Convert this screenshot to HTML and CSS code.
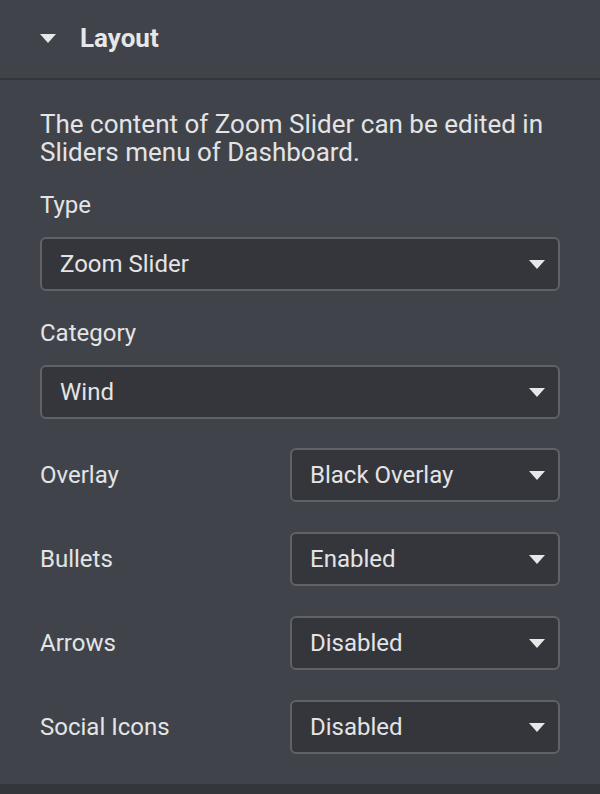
FILE: index.html
```html
<!DOCTYPE html>
<html>
<head>
<meta charset="utf-8">
<link rel="stylesheet" href="styles.css">
</head>
<body>
<div class="panel">
  <div class="section-head">
    <svg class="caret" width="16" height="9" viewBox="0 0 16 9"><path d="M0 0H16L8 9Z" fill="#e6e7e9"/></svg>
    <span class="section-title">Layout</span>
  </div>
  <div class="section-body">
    <p class="desc">The content of Zoom Slider can be edited in Sliders menu of Dashboard.</p>
    <div class="field block">
      <label class="label">Type</label>
      <div class="select"><span>Zoom Slider</span><svg class="arrow" width="16" height="9" viewBox="0 0 16 9"><path d="M0 0H16L8 9Z" fill="#e6e7e9"/></svg></div>
    </div>
    <div class="field block">
      <label class="label">Category</label>
      <div class="select"><span>Wind</span><svg class="arrow" width="16" height="9" viewBox="0 0 16 9"><path d="M0 0H16L8 9Z" fill="#e6e7e9"/></svg></div>
    </div>
    <div class="field inline">
      <label class="label">Overlay</label>
      <div class="select"><span>Black Overlay</span><svg class="arrow" width="16" height="9" viewBox="0 0 16 9"><path d="M0 0H16L8 9Z" fill="#e6e7e9"/></svg></div>
    </div>
    <div class="field inline">
      <label class="label">Bullets</label>
      <div class="select"><span>Enabled</span><svg class="arrow" width="16" height="9" viewBox="0 0 16 9"><path d="M0 0H16L8 9Z" fill="#e6e7e9"/></svg></div>
    </div>
    <div class="field inline">
      <label class="label">Arrows</label>
      <div class="select"><span>Disabled</span><svg class="arrow" width="16" height="9" viewBox="0 0 16 9"><path d="M0 0H16L8 9Z" fill="#e6e7e9"/></svg></div>
    </div>
    <div class="field inline">
      <label class="label">Social Icons</label>
      <div class="select"><span>Disabled</span><svg class="arrow" width="16" height="9" viewBox="0 0 16 9"><path d="M0 0H16L8 9Z" fill="#e6e7e9"/></svg></div>
    </div>
  </div>
  <div class="next-section"></div>
</div>
</body>
</html>
```
FILE: styles.css
```css
html, body {
  margin: 0;
  padding: 0;
  background: #404349;
}
body {
  font-family: Roboto, "Liberation Sans", sans-serif;
  color: #e3e4e6;
  width: 600px;
  height: 794px;
  overflow: hidden;
}
.panel {
  display: flex;
  flex-direction: column;
  height: 794px;
}
.section-head {
  height: 80px;
  flex: none;
  box-sizing: border-box;
  border-bottom: 2px solid #33363b;
  display: flex;
  align-items: center;
  padding-left: 40px;
  padding-bottom: 2px;
}
.caret {
  display: block;
  margin-right: 24px;
}
.section-title {
  font-size: 26px;
  font-weight: 700;
  color: #e6e7e9;
}
.section-body {
  padding: 30px 40px 30px;
  display: flex;
  flex-direction: column;
  flex: 1;
}
.desc {
  margin: 0 0 25px;
  font-size: 26px;
  line-height: 28px;
}
.field.block {
  display: flex;
  flex-direction: column;
  gap: 18px;
  margin-bottom: 28px;
}
.field.block + .field.inline {
  margin-top: 1px;
}
.field.inline {
  display: flex;
  align-items: center;
  justify-content: space-between;
  margin-bottom: 30px;
}
.field.inline:last-child {
  margin-bottom: 0;
}
.label {
  font-size: 24px;
  line-height: 28px;
}
.select {
  height: 54px;
  box-sizing: border-box;
  border: 2px solid #5f6267;
  border-radius: 6px;
  background: #34363b;
  display: flex;
  align-items: center;
  justify-content: space-between;
  padding: 0 13px 0 18px;
  font-size: 24px;
  color: #e3e4e6;
}
.field.inline .select {
  width: 270px;
}
.arrow {
  display: block;
}
.next-section {
  height: 10px;
  background: #33363b;
  flex: none;
}
```
